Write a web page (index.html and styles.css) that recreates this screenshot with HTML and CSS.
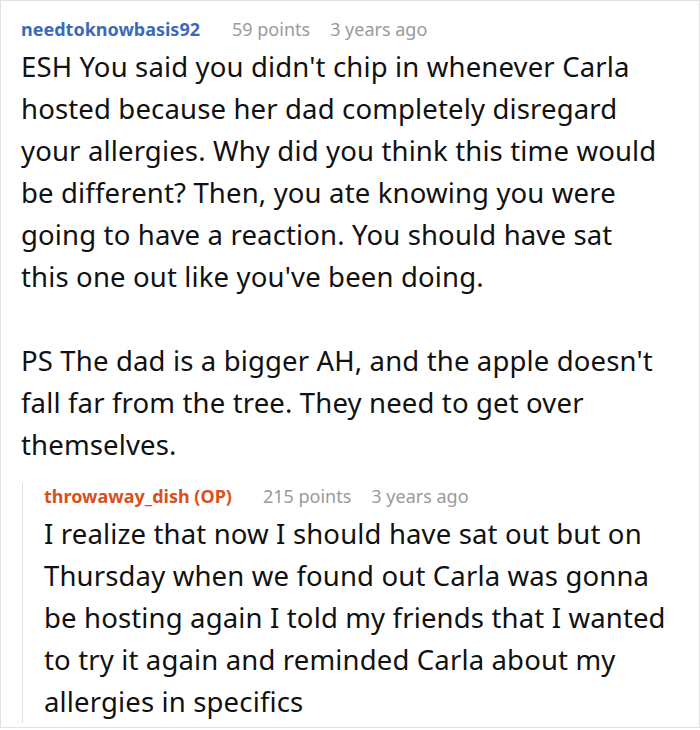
FILE: index.html
```html
<!DOCTYPE html>
<html lang="en">
<head>
<meta charset="utf-8">
<title>Comment</title>
<link rel="stylesheet" href="styles.css">
</head>
<body>
<div class="frame">
  <div class="comment">
    <div class="meta">
      <span class="user">needtoknowbasis92</span>
      <span class="points">59 points</span>
      <span class="time">3 years ago</span>
    </div>
    <p class="text">ESH You said you didn't chip in whenever Carla<br>hosted because her dad completely disregard<br>your allergies. Why did you think this time would<br>be different? Then, you ate knowing you were<br>going to have a reaction. You should have sat<br>this one out like you've been doing.<br><br>PS The dad is a bigger AH, and the apple doesn't<br>fall far from the tree. They need to get over<br>themselves.</p>
    <div class="reply">
      <div class="meta reply-meta">
        <span class="user op">throwaway_dish (OP)</span>
        <span class="points">215 points</span>
        <span class="time">3 years ago</span>
      </div>
      <p class="text reply-text">I realize that now I should have sat out but on<br>Thursday when we found out Carla was gonna<br>be hosting again I told my friends that I wanted<br>to try it again and reminded Carla about my<br>allergies in specifics</p>
    </div>
  </div>
</div>
</body>
</html>
```

FILE: styles.css
```css
html, body {
  margin: 0;
  padding: 0;
  background: #ffffff;
}

body {
  font-family: "Noto Sans", "Open Sans", sans-serif;
  color: #111111;
}

.frame {
  box-sizing: border-box;
  width: 700px;
  height: 728px;
  border: 1px solid #e2e2e2;
  overflow: hidden;
}

.comment {
  padding: 15px 10px 0 20px;
}

.meta {
  display: flex;
  align-items: baseline;
  font-size: 18px;
  line-height: 26px;
  margin-bottom: 4px;
  white-space: nowrap;
}

.user {
  font-weight: 700;
  color: #3a6bb8;
  margin-right: 32px;
}

.user.op {
  color: #d9501c;
  margin-right: 31px;
}

.points {
  color: #9a9a9a;
  margin-right: 20px;
}

.time {
  color: #9a9a9a;
}

.text {
  margin: 0;
  font-size: 27.5px;
  letter-spacing: 0.15px;
  line-height: 42px;
  white-space: nowrap;
}

.reply {
  margin-top: 29px;
  margin-left: 1px;
  border-left: 1px solid #e0e0e0;
  padding-left: 21px;
}

.reply-meta {
  margin-top: -12px;
}

.reply-text {
  margin-bottom: -9px;
}
```
